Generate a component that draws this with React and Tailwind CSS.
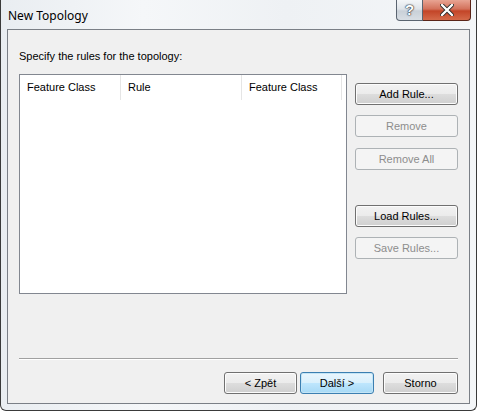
import React from 'react'

const font = {fontFamily: '"Liberation Sans", Arial, sans-serif'}

const Btn = ({children, disabled, focused, className = ''}) => (
  <div
    className={
      'flex items-center justify-center h-[22px] rounded-[3px] border text-[11px] ' +
      (disabled
        ? 'border-[#adb2b5] bg-[#f4f4f4] text-[#8d8d8d] '
        : focused
        ? 'border-[#3c7fb1] bg-[linear-gradient(#eaf6fd_0%,#d9f0fc_50%,#bee6fd_51%,#a7d9f5_100%)] text-black shadow-[inset_0_0_0_1px_#c4e5f6] '
        : 'border-[#707070] bg-[linear-gradient(#f2f2f2_0%,#ebebeb_50%,#dddddd_51%,#cfcfcf_100%)] text-black shadow-[inset_0_0_0_1px_#fcfcfc] ') +
      className
    }
  >
    {children}
  </div>
)

const HeaderCell = ({children, w}) => (
  <div className={`${w} h-full flex items-center pl-[7px] border-r border-[#e5e5e5] text-[11px]`}>
    {children}
  </div>
)

export default function App() {
  return (
    <div className="w-[477px] h-[412px] bg-white" style={font}>
      <div className="w-[477px] h-[411px] flex flex-col border-x border-b border-[#3a3a3a] rounded-b-[6px] bg-[linear-gradient(90deg,#e9edf1,#f5f7f9_30%,#eef1f4_60%,#f4f6f8)] px-[6px] pb-[6px]">
        {/* title bar */}
        <div className="h-[29px] flex items-start shrink-0 relative">
          <div className="pt-[7px] pl-[1px] text-[12px] text-black" style={{fontFamily: '"Noto Sans", sans-serif'}}>
            New Topology
          </div>
          <div className="ml-auto mr-[-1px] flex h-[21px]">
            <div className="w-[27px] h-full border border-t-0 border-[#5a6470] rounded-bl-[4px] bg-[linear-gradient(#f4f6f8,#dfe4e9_45%,#c9d0d8_55%,#d8dee4)] flex items-center justify-center">
              <span className="text-[15px] font-bold text-white [text-shadow:0_0_1px_#2b333d,0_0_1px_#2b333d,0_0_2px_#2b333d]">?</span>
            </div>
            <div className="w-[48px] h-full border border-t-0 border-l-0 border-[#5a2418] rounded-br-[4px] bg-[linear-gradient(#e8a493,#d3715b_45%,#c34528_55%,#d46a4a)] flex items-center justify-center">
              <svg width="14" height="12" viewBox="0 0 14 12">
                <path d="M2 1 L12 11 M12 1 L2 11" stroke="#2b2b2b" strokeWidth="4" strokeLinecap="round" />
                <path d="M2 1 L12 11 M12 1 L2 11" stroke="#ffffff" strokeWidth="2.4" strokeLinecap="round" />
              </svg>
            </div>
          </div>
        </div>
        {/* client area */}
        <div className="flex-1 border border-[#7a7f86] bg-[#f0f0f0] flex flex-col pl-[11px] pr-[11px]">
          <div className="pt-[20px] text-[11px] text-black leading-[13px]">
            Specify the rules for the topology:
          </div>
          <div className="flex mt-[11px]">
            <div className="w-[328px] h-[220px] border border-[#828790] bg-white">
              <div className="h-[25px] flex text-black">
                <HeaderCell w="w-[101px]">Feature Class</HeaderCell>
                <HeaderCell w="w-[121px]">Rule</HeaderCell>
                <HeaderCell w="w-[100px]">Feature Class</HeaderCell>
              </div>
            </div>
            <div className="ml-[8px] w-[103px] flex flex-col pt-[9px]">
              <Btn>Add Rule...</Btn>
              <Btn disabled className="mt-[10px]">Remove</Btn>
              <Btn disabled className="mt-[11px]">Remove All</Btn>
              <Btn className="mt-[35px]">Load Rules...</Btn>
              <Btn disabled className="mt-[10px]">Save Rules...</Btn>
            </div>
          </div>
          <div className="mt-[64px] h-[2px] border-t border-[#a0a0a0] border-b border-b-white" />
          <div className="flex justify-end mt-[12px]">
            <Btn className="w-[73px]">&lt; Zpět</Btn>
            <Btn focused className="w-[74px] ml-[3px]">Další &gt;</Btn>
            <Btn className="w-[75px] ml-[9px]">Storno</Btn>
          </div>
        </div>
      </div>
    </div>
  )
}
